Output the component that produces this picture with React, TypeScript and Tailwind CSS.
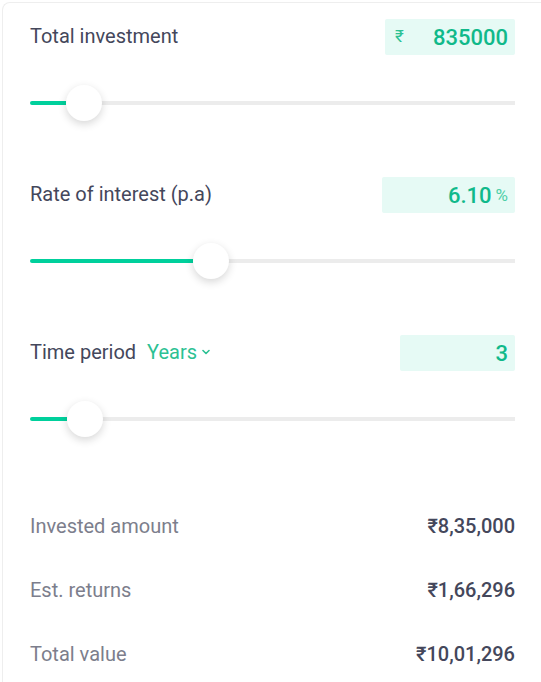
import React from "react";

function Slider({ fill }: { fill: number }) {
  return (
    <div className="flex items-center h-9">
      <div className="h-[4px] bg-[#00d09c] rounded-l-full" style={{ width: fill }} />
      <div className="w-9 h-9 rounded-full bg-white shadow-[0_3px_8px_rgba(0,0,0,0.16)] shrink-0 relative z-10" />
      <div className="h-[4px] bg-[#ececec] flex-1 -ml-9" />
    </div>
  );
}

function Row({
  label,
  boxClass,
  children,
}: {
  label: React.ReactNode;
  boxClass: string;
  children: React.ReactNode;
}) {
  return (
    <div className="flex items-center justify-between h-9">
      <div className="text-[20px] text-[#44475b] flex items-center -mt-[3px]">{label}</div>
      <div className={`h-9 bg-[#e6faf5] flex items-center rounded-[2px] ${boxClass}`}>{children}</div>
    </div>
  );
}

export default function App() {
  return (
    <div
      className="w-[541px] h-[682px] bg-white overflow-hidden"
      style={{ fontFamily: "Roboto, 'Liberation Sans', sans-serif" }}
    >
      <div className="ml-[2px] mt-[2px] h-[700px] border-l border-t border-[#eeeeee] rounded-tl-lg pl-[27px] pr-[26px] pt-[16px]">
        <Row label="Total investment" boxClass="w-[130px] pl-[10px] pr-[7px] justify-between">
          <span className="text-[17px] text-[#2cc193]">₹</span>
          <span className="text-[22px] text-[#10b98a] font-medium">835000</span>
        </Row>
        <div className="mt-[30px]">
          <Slider fill={36} />
        </div>

        <div className="mt-[56px]">
          <Row label="Rate of interest (p.a)" boxClass="w-[133px] pr-[7px] justify-end">
            <span className="text-[22px] text-[#10b98a] font-medium">6.10</span>
            <span className="text-[17px] text-[#4fcfa8] ml-[4px] mt-[1px]">%</span>
          </Row>
        </div>
        <div className="mt-[30px]">
          <Slider fill={163} />
        </div>

        <div className="mt-[56px]">
          <Row
            label={
              <>
                <span>Time period</span>
                <span className="text-[#2cc193] ml-[11px]">Years</span>
                <svg className="ml-[5px] mt-[1px]" width="8" height="6" viewBox="0 0 8 6">
                  <path d="M1 1.5 L4 4.5 L7 1.5" fill="none" stroke="#2cc193" strokeWidth="1.6" strokeLinecap="round" strokeLinejoin="round" />
                </svg>
              </>
            }
            boxClass="w-[115px] pr-[7px] justify-end"
          >
            <span className="text-[22px] text-[#10b98a] font-medium">3</span>
          </Row>
        </div>
        <div className="mt-[30px]">
          <Slider fill={37} />
        </div>

        <div className="mt-[77px] flex flex-col gap-[40px]">
          {[
            ["Invested amount", "₹8,35,000"],
            ["Est. returns", "₹1,66,296"],
            ["Total value", "₹10,01,296"],
          ].map(([l, v]) => (
            <div key={l} className="flex items-center justify-between h-6">
              <span className="text-[20px] text-[#7c7e8c]">{l}</span>
              <span className="text-[20px] text-[#44475b] font-medium">{v}</span>
            </div>
          ))}
        </div>
      </div>
    </div>
  );
}
